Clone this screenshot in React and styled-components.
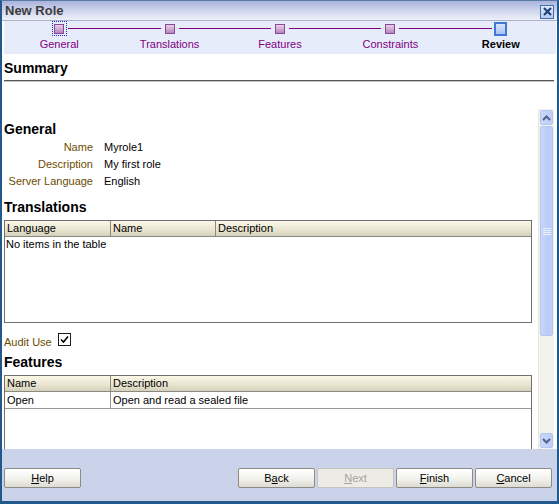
import React from 'react';
import styled, { createGlobalStyle } from 'styled-components';

const GlobalStyle = createGlobalStyle`
  html, body {
    margin: 0;
    padding: 0;
    background: #ffffff;
  }
  body {
    font-family: "Liberation Sans", Arial, sans-serif;
    font-size: 11px;
    color: #000;
  }
`;

const Window = styled.div`
  width: 559px;
  height: 504px;
  box-sizing: border-box;
  border: 2px solid #22598c;
  border-top: 1px solid #5a7aa8;
  border-bottom-width: 3px;
  display: flex;
  flex-direction: column;
  background: #fff;
  overflow: hidden;
`;

const TitleBar = styled.div`
  height: 19px;
  flex: none;
  display: flex;
  align-items: center;
  justify-content: space-between;
  padding: 0 3px 0 3px;
  background: linear-gradient(#a9b3db, #d2d8ee 55%, #eef0f8);
  border-bottom: 1px solid #aab2d0;
`;

const Title = styled.span`
  font-size: 13px;
  font-weight: bold;
  color: #3c3c3c;
`;

const CloseButton = styled.div`
  width: 12px;
  height: 12px;
  border: 1px solid #3d6fb0;
  background: linear-gradient(#e4ecfa, #b8cbee);
  display: flex;
  align-items: center;
  justify-content: center;
  margin-top: 2px;
`;

const Train = styled.div`
  flex: none;
  height: 33px;
  margin: 0 1px 0 2px;
  background: #e7ecfa;
  display: grid;
  grid-template-columns: repeat(5, 1fr);
`;

const Stop = styled.div`
  position: relative;
  display: flex;
  flex-direction: column;
  align-items: center;
  padding-top: 0;

  &::before, &::after {
    content: '';
    position: absolute;
    top: 7px;
    height: 1px;
    background: #800080;
    width: calc(50% - 9px);
  }
  &::before {
    left: 0;
    display: ${p => (p.$first ? 'none' : 'block')};
  }
  &::after {
    right: 0;
    display: ${p => (p.$last ? 'none' : 'block')};
  }
`;

const Marker = styled.div`
  width: 15px;
  height: 15px;
  box-sizing: border-box;
  display: flex;
  align-items: center;
  justify-content: center;
  border: 1px dotted ${p => (p.$focus ? '#1a2cd0' : 'transparent')};
`;

const Square = styled.div`
  box-sizing: border-box;
  width: ${p => (p.$current ? 14 : 10)}px;
  height: ${p => (p.$current ? 14 : 10)}px;
  border: ${p => (p.$current ? '2px solid #3f78d8' : '1px solid #8a4a92')};
  background: ${p =>
    p.$current
      ? 'linear-gradient(#d8e6fa, #a8c4ee)'
      : 'linear-gradient(#e8d0ea, #b884bc)'};
`;

const StopLabel = styled.span`
  margin-top: 2px;
  color: ${p => (p.$current ? '#000' : '#800080')};
  font-weight: ${p => (p.$current ? 'bold' : 'normal')};
  font-size: 11px;
`;

const SummaryHeader = styled.div`
  flex: none;
  margin: 0 3px 0 2px;
  padding-top: 6px;
  height: 20px;
  font-size: 14px;
  font-weight: bold;
  border-bottom: 1px solid #555;
  box-shadow: 0 1px 0 #c4c4c4;
`;

const Spacer = styled.div`
  flex: none;
  height: 28px;
`;

const Main = styled.div`
  flex: none;
  height: 340px;
  display: flex;
  padding-right: 3px;
`;

const Content = styled.div`
  flex: 1;
  overflow: hidden;
  padding: 11px 6px 0 2px;
`;

const SectionTitle = styled.div`
  font-size: 14px;
  font-weight: bold;
  height: 18px;
  line-height: 18px;
  margin-top: ${p => p.$top ?? 10}px;
`;

const FormRow = styled.div`
  display: flex;
  height: 17px;
  align-items: center;
  &:first-of-type {
    margin-top: 1px;
  }
`;

const FieldLabel = styled.span`
  width: 89px;
  text-align: right;
  color: #6b4c00;
`;

const FieldValue = styled.span`
  margin-left: 11px;
`;

const Table = styled.div`
  margin-top: 4px;
  width: 528px;
  height: ${p => p.$height}px;
  box-sizing: border-box;
  border: 1px solid #6f6f6f;
  flex: none;
`;

const HeadRow = styled.div`
  display: grid;
  grid-template-columns: ${p => p.$cols};
  height: 15px;
  background: linear-gradient(#fbf8e8, #e8e4d0 60%, #d4d0bc);
  border-bottom: 1px solid #8a8a80;
`;

const HeadCell = styled.div`
  padding-left: 2px;
  line-height: 15px;
  border-left: ${p => (p.$first ? 'none' : '1px solid #8a8a80')};
`;

const BodyRow = styled.div`
  display: grid;
  grid-template-columns: ${p => p.$cols};
  height: 16px;
  border-bottom: 1px solid #9a9a9a;
`;

const BodyCell = styled.div`
  padding-left: 2px;
  line-height: 16px;
  border-left: ${p => (p.$first ? 'none' : '1px solid #9a9a9a')};
`;

const EmptyText = styled.div`
  padding-left: 1px;
  line-height: 15px;
`;

const CheckRow = styled.div`
  display: flex;
  align-items: center;
  height: 16px;
  margin-top: 10px;
`;

const CheckLabel = styled.span`
  color: #6b4c00;
  margin-top: 2px;
`;

const CheckBox = styled.div`
  width: 13px;
  height: 13px;
  box-sizing: border-box;
  border: 1px solid #1c1c1c;
  margin-left: 6px;
  margin-top: -4px;
  display: flex;
  align-items: center;
  justify-content: center;
  background: #fff;
`;

const ScrollBar = styled.div`
  width: 16px;
  flex: none;
  display: flex;
  flex-direction: column;
  background: #f3f2ec;
  border-left: 1px solid #e6e6e0;
  box-sizing: border-box;
`;

const ScrollButton = styled.div`
  height: 15px;
  margin: 1px 1px;
  box-sizing: border-box;
  border: 1px solid #b4c6f0;
  border-radius: 2px;
  background: linear-gradient(90deg, #cad8fb, #bccdf8);
  display: flex;
  align-items: center;
  justify-content: center;
  flex: none;
`;

const Track = styled.div`
  flex: 1;
  display: flex;
  flex-direction: column;
`;

const Thumb = styled.div`
  margin: 0 1px;
  height: 210px;
  box-sizing: border-box;
  border: 1px solid #b4c6f0;
  border-radius: 2px;
  background: linear-gradient(90deg, #c8d6fb, #b8cbf8 70%, #c2d2fa);
  display: flex;
  align-items: center;
  justify-content: center;
`;

const Grip = styled.div`
  width: 8px;
  height: 7px;
  background: repeating-linear-gradient(#eef2fe 0 1px, transparent 1px 2px);
`;

const Footer = styled.div`
  flex: 1;
  background: #cbd3eb;
  display: flex;
  align-items: flex-start;
  padding: 19px 3px 0 2px;
  gap: 2px;
`;

const Button = styled.div`
  width: 77px;
  height: 20px;
  box-sizing: border-box;
  border: 1px solid ${p => (p.$disabled ? '#c4c4bc' : '#8c8c84')};
  border-radius: 2px;
  background: ${p =>
    p.$disabled ? '#ecebe5' : 'linear-gradient(#ffffff, #f4f4ee 50%, #dcdcd4)'};
  color: ${p => (p.$disabled ? '#a3a3a0' : '#000')};
  display: flex;
  align-items: center;
  justify-content: center;
  margin-left: ${p => p.$push ?? 0}px;
`;

const Key = styled.span`
  text-decoration: underline;
`;

const steps = ['General', 'Translations', 'Features', 'Constraints', 'Review'];

const translationCols = '105px 105px 1fr';
const featureCols = '105px 1fr';

const Label = ({ text }) => (
  <>
    <Key>{text[0]}</Key>
    {text.slice(1)}
  </>
);

const App = () => {
  return (
    <>
      <GlobalStyle />
      <Window>
        <TitleBar>
          <Title>New Role</Title>
          <CloseButton>
            <svg width="9" height="9" viewBox="0 0 9 9">
              <path d="M1 1 L8 8 M8 1 L1 8" stroke="#22407a" strokeWidth="2.2" />
            </svg>
          </CloseButton>
        </TitleBar>

        <Train>
          {steps.map((s, i) => (
            <Stop key={s} $first={i === 0} $last={i === steps.length - 1}>
              <Marker $focus={i === 0}>
                <Square $current={i === steps.length - 1} />
              </Marker>
              <StopLabel $current={i === steps.length - 1}>{s}</StopLabel>
            </Stop>
          ))}
        </Train>

        <SummaryHeader>Summary</SummaryHeader>
        <Spacer />

        <Main>
          <Content>
            <SectionTitle $top={0}>General</SectionTitle>
            <FormRow>
              <FieldLabel>Name</FieldLabel>
              <FieldValue>Myrole1</FieldValue>
            </FormRow>
            <FormRow>
              <FieldLabel>Description</FieldLabel>
              <FieldValue>My first role</FieldValue>
            </FormRow>
            <FormRow>
              <FieldLabel>Server Language</FieldLabel>
              <FieldValue>English</FieldValue>
            </FormRow>

            <SectionTitle $top={9}>Translations</SectionTitle>
            <Table $height={103}>
              <HeadRow $cols={translationCols}>
                <HeadCell $first>Language</HeadCell>
                <HeadCell>Name</HeadCell>
                <HeadCell>Description</HeadCell>
              </HeadRow>
              <EmptyText>No items in the table</EmptyText>
            </Table>

            <CheckRow>
              <CheckLabel>Audit Use</CheckLabel>
              <CheckBox>
                <svg width="9" height="9" viewBox="0 0 9 9">
                  <path d="M1 4.5 L3.5 7 L8 1.5" fill="none" stroke="#000" strokeWidth="1.6" />
                </svg>
              </CheckBox>
            </CheckRow>

            <SectionTitle $top={4}>Features</SectionTitle>
            <Table $height={120}>
              <HeadRow $cols={featureCols}>
                <HeadCell $first>Name</HeadCell>
                <HeadCell>Description</HeadCell>
              </HeadRow>
              <BodyRow $cols={featureCols}>
                <BodyCell $first>Open</BodyCell>
                <BodyCell>Open and read a sealed file</BodyCell>
              </BodyRow>
            </Table>
          </Content>

          <ScrollBar>
            <ScrollButton>
              <svg width="9" height="6" viewBox="0 0 9 6">
                <path d="M1 5 L4.5 1.5 L8 5" fill="none" stroke="#4d6185" strokeWidth="2" />
              </svg>
            </ScrollButton>
            <Track>
              <Thumb>
                <Grip />
              </Thumb>
            </Track>
            <ScrollButton>
              <svg width="9" height="6" viewBox="0 0 9 6">
                <path d="M1 1 L4.5 4.5 L8 1" fill="none" stroke="#4d6185" strokeWidth="2" />
              </svg>
            </ScrollButton>
          </ScrollBar>
        </Main>

        <Footer>
          <Button><Label text="Help" /></Button>
          <Button $push={155}>B<Key>a</Key>ck</Button>
          <Button $disabled><Label text="Next" /></Button>
          <Button><Label text="Finish" /></Button>
          <Button><Label text="Cancel" /></Button>
        </Footer>
      </Window>
    </>
  );
};

export default App;
